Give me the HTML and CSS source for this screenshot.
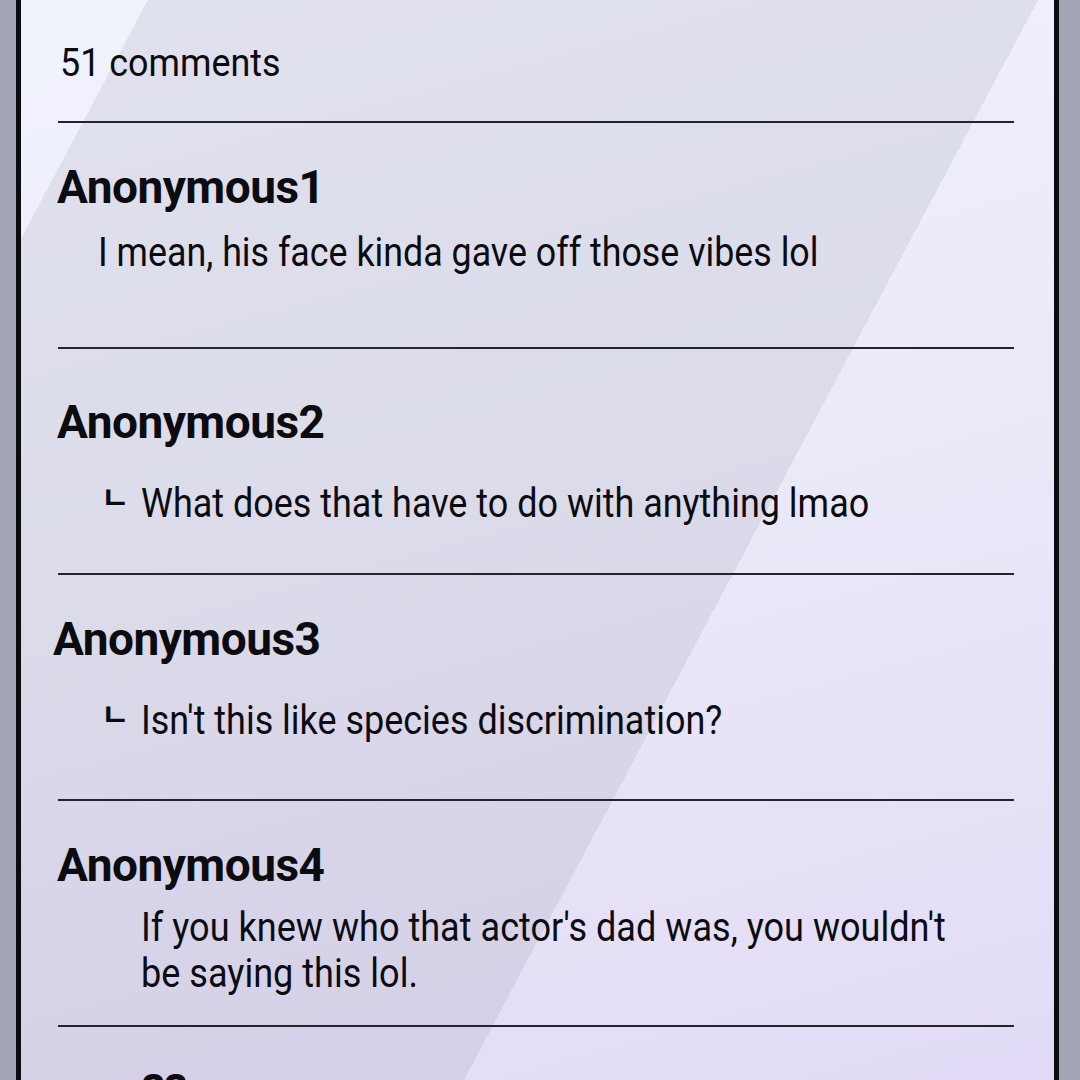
FILE: index.html
```html
<!DOCTYPE html>
<html lang="en">
<head>
<meta charset="utf-8">
<title>Comments</title>
<link rel="stylesheet" href="styles.css">
</head>
<body>
<div class="screen">
  <section class="panel">
    <div class="count">51 comments</div>
    <ul class="comments">
      <li class="comment">
        <div class="author">Anonymous1</div>
        <p class="text text--flat">I mean, his face kinda gave off those vibes lol</p>
      </li>
      <li class="comment comment--loose">
        <div class="author">Anonymous2</div>
        <p class="text text--reply"><span class="hook">ㄴ</span><span class="body">What does that have to do with anything lmao</span></p>
      </li>
      <li class="comment">
        <div class="author author--shift">Anonymous3</div>
        <p class="text text--reply"><span class="hook">ㄴ</span><span class="body">Isn't this like species discrimination?</span></p>
      </li>
      <li class="comment">
        <div class="author">Anonymous4</div>
        <p class="text text--wrap">If you knew who that actor's dad was, you wouldn't be saying this lol.</p>
      </li>
      <li class="comment">
        <div class="author author--indent">??</div>
      </li>
    </ul>
  </section>
</div>
</body>
</html>
```

FILE: styles.css
```css
* {
  box-sizing: border-box;
}

html,
body {
  margin: 0;
  padding: 0;
}

body {
  width: 1080px;
  height: 1080px;
  overflow: hidden;
  background: #a3a4b4;
  font-family: Roboto, "Noto Sans", "Liberation Sans", sans-serif;
  color: #0c0c10;
}

.screen {
  height: 1080px;
  padding-left: 16px;
}

/* glass panel with a diagonal reflection band */
.panel {
  width: 1043px;
  height: 1080px;
  overflow: hidden;
  border-left: 5px solid #0b0b10;
  border-right: 5px solid #0b0b10;
  padding-top: 44px;
  background:
    linear-gradient(118deg,
      rgba(0, 0, 0, 0) 0 112px,
      rgba(60, 60, 84, 0.09) 112px 898px,
      rgba(0, 0, 0, 0) 898px),
    linear-gradient(165deg, #f0f2fc 0%, #ebebf8 45%, #e2daf6 100%);
}

.count {
  margin: 0 0 38px 39px;
  font-size: 39px;
  line-height: 39px;
  transform: scaleX(0.92);
  transform-origin: left center;
}

.comments {
  list-style: none;
  margin: 0;
  padding: 0;
}

.comment {
  width: 956px;
  height: 226px;
  margin-left: 37px;
  padding-top: 41px;
  border-top: 2px solid #24242e;
}

.comment--loose {
  padding-top: 50px;
}

.author {
  margin-left: -1px;
  font-size: 46px;
  line-height: 46px;
  font-weight: 700;
  letter-spacing: -0.5px;
}

.author--shift {
  margin-left: -5px;
}

.author--indent {
  margin-left: 84px;
}

.text {
  margin: 0;
  font-size: 41px;
  line-height: 46px;
}

.text--flat {
  margin-top: 19px;
  padding-left: 40px;
  white-space: nowrap;
  transform: scaleX(0.873);
  transform-origin: 40px center;
}

.text--reply {
  margin-top: 35px;
  padding-left: 43px;
  white-space: nowrap;
}

/* reply marker */
.hook {
  display: inline-block;
  width: 40px;
  font-family: "Noto Sans CJK KR", "Noto Sans CJK SC", sans-serif;
  font-size: 31px;
  font-weight: 700;
  line-height: 1;
  vertical-align: 8px;
}

.text--reply .body {
  display: inline-block;
  transform: scaleX(0.877);
  transform-origin: left center;
}

.text--wrap {
  margin-top: 16px;
  margin-left: 83px;
  width: 950px;
  transform: scaleX(0.88);
  transform-origin: left top;
}
```
